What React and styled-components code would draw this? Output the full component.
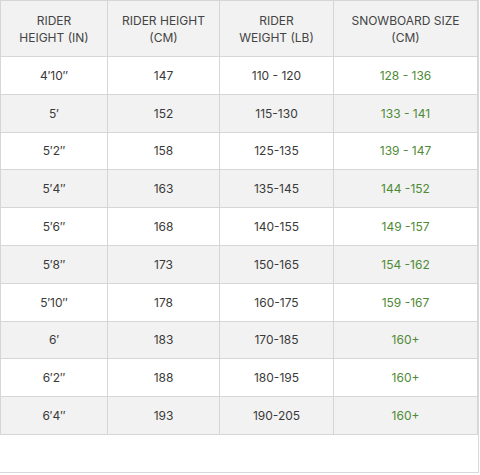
import React from 'react';
import styled, { createGlobalStyle } from 'styled-components';

const GlobalStyle = createGlobalStyle`
  *, *::before, *::after {
    box-sizing: border-box;
  }
  body {
    margin: 0;
    background: #fff;
    font-family: Inter, "Noto Sans", sans-serif;
  }
`;

const Wrapper = styled.div`
  width: 480px;
  margin-left: -1px;
  border: 1px solid #d9d9d9;
  border-top: none;
  padding-bottom: 37px;
`;

const Table = styled.table`
  width: 100%;
  border-collapse: collapse;
  table-layout: fixed;
`;

const Col = styled.col`
  width: ${(p) => (p.$w ? `${p.$w}px` : 'auto')};
`;

const HeadCell = styled.th`
  height: 56px;
  padding: 0 2px;
  background: #f2f2f2;
  border: 1px solid #d6d6d6;
  color: #444;
  font-size: 12px;
  font-weight: 400;
  line-height: 17px;
  text-transform: uppercase;
  text-align: center;
`;

const Row = styled.tr`
  background: ${(p) => (p.$alt ? '#f2f2f2' : '#fff')};
`;

const Cell = styled.td`
  height: 37.8px;
  padding: 0 2px;
  border: 1px solid #d6d6d6;
  color: ${(p) => (p.$green ? '#4f8a36' : '#3a3a3a')};
  font-size: 12px;
  text-align: center;
`;

const columns = [
  { label: ['Rider', 'Height (in)'], w: 107 },
  { label: ['Rider Height', '(cm)'], w: 112 },
  { label: ['Rider', 'Weight (lb)'], w: 114 },
  { label: ['Snowboard Size', '(cm)'] },
];

const rows = [
  ['4\u203210\u2033', '147', '110 - 120', '128 - 136'],
  ['5\u2032', '152', '115-130', '133 - 141'],
  ['5\u20322\u2033', '158', '125-135', '139 - 147'],
  ['5\u20324\u2033', '163', '135-145', '144 -152'],
  ['5\u20326\u2033', '168', '140-155', '149 -157'],
  ['5\u20328\u2033', '173', '150-165', '154 -162'],
  ['5\u203210\u2033', '178', '160-175', '159 -167'],
  ['6\u2032', '183', '170-185', '160+'],
  ['6\u20322\u2033', '188', '180-195', '160+'],
  ['6\u20324\u2033', '193', '190-205', '160+'],
];

export default function App() {
  return (
    <>
      <GlobalStyle />
      <Wrapper>
        <Table>
          <colgroup>
            {columns.map((c) => (
              <Col key={c.label.join()} $w={c.w} />
            ))}
          </colgroup>
          <thead>
            <tr>
              {columns.map((c) => (
                <HeadCell key={c.label.join()}>
                  {c.label[0]}
                  <br />
                  {c.label[1]}
                </HeadCell>
              ))}
            </tr>
          </thead>
          <tbody>
            {rows.map((r, i) => (
              <Row key={r[0]} $alt={i % 2 === 1}>
                {r.map((v, j) => (
                  <Cell key={j} $green={j === 3}>{v}</Cell>
                ))}
              </Row>
            ))}
          </tbody>
        </Table>
      </Wrapper>
    </>
  );
}
